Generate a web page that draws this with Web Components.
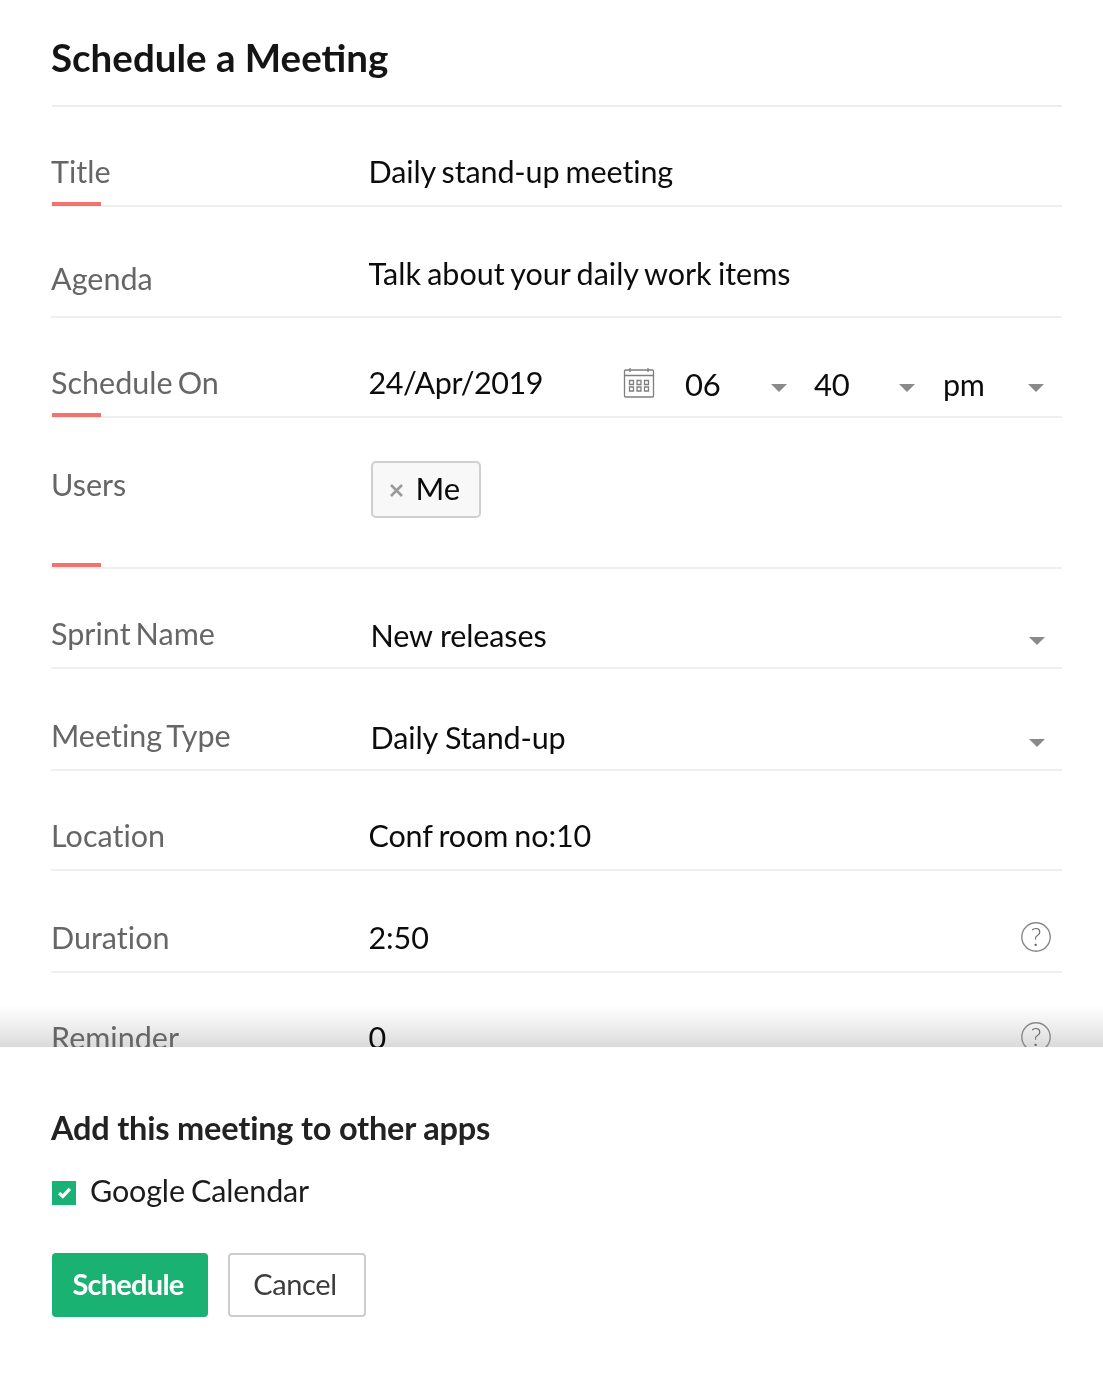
<!DOCTYPE html>
<html><head><meta charset="utf-8"><title>Schedule a Meeting</title>
<style>
html,body{margin:0;background:#fff}
body{font-family:Lato,"Open Sans",sans-serif;width:1103px;height:1377px;overflow:hidden}
</style></head><body>
<schedule-dialog>
  <form-heading slot="head">Schedule a Meeting</form-heading>
  <form-field label="Title" h="100" lt="45" vt="45" mark>Daily stand-up meeting</form-field>
  <form-field label="Agenda" h="111" lt="52" vt="47"><span style="letter-spacing:0">Talk about your daily work items</span></form-field>
  <form-field label="Schedule On" h="100" lt="45" vt="45" mark>
    <date-time></date-time>
  </form-field>
  <form-field label="Users" h="151" lt="47" vt="43" mark="hi" vx="2"><user-chip>Me</user-chip></form-field>
  <form-field label="Sprint Name" h="100" lt="45" vt="47" vx="2"><select-box style="word-spacing:0">New releases</select-box></form-field>
  <form-field label="Meeting Type" h="102" lt="47" vt="49" vx="2"><select-box style="word-spacing:0">Daily Stand-up</select-box></form-field>
  <form-field label="Location" h="100" lt="45" vt="45">Conf room no:10</form-field>
  <form-field label="Duration" h="102" lt="47" vt="47"><help-value>2:50</help-value></form-field>
  <form-field label="Reminder" h="100" lt="45" vt="45"><help-value>0</help-value></form-field>
  <form-footer slot="foot"></form-footer>
</schedule-dialog>
<script>
const def=(name,css,html,extra)=>{
  customElements.define(name,class extends HTMLElement{
    constructor(){super();this.attachShadow({mode:'open'}).innerHTML=`<style>${css}</style>${html}`;}
    connectedCallback(){if(extra)extra(this)}
  });
};
def('schedule-dialog',`
  :host{display:block;width:1103px;height:1377px;background:#fff;filter:blur(.4px)}
  .scroll{height:1047px;overflow:hidden;box-sizing:border-box;padding:0 41px 0 51px;
    background:linear-gradient(to bottom,rgba(220,220,220,0),rgba(222,222,222,.6) 60%,rgb(218,218,218)) left bottom/100% 42px no-repeat}
`,`<div class="scroll"><slot name="head"></slot><slot></slot></div><slot name="foot"></slot>`);
def('form-heading',`
  :host{display:block;box-sizing:border-box;height:107px;padding-top:33px;margin-left:1px;border-bottom:2px solid #ececec;
    font-size:38.5px;line-height:48px;font-weight:700;color:#141414;letter-spacing:0;text-indent:-1px}
`,`<slot></slot>`);
def('form-field',`
  :host{display:grid;grid-template-columns:317.5px 1fr;box-sizing:border-box;position:relative;border-bottom:2px solid #efefef;
    font-size:30.5px;line-height:38px;color:#0c0c0c;letter-spacing:-.12px;word-spacing:-1.5px}
  :host{border-image:linear-gradient(to right,transparent 1px,#efefef 1px) 2}
  .l{color:#666;letter-spacing:.02px;word-spacing:-2.8px}
  .v{min-width:0}
  .m{position:absolute;left:1px;bottom:-1px;width:49px;height:4px;background:#f2726d;display:none}
  :host([mark]) .m{display:block}
  :host([mark="hi"]) .m{bottom:0}
`,`<div class="l"></div><div class="v"><slot></slot></div><div class="m"></div>`,el=>{
  const s=el.shadowRoot,a=k=>el.getAttribute(k);
  el.style.height=a('h')+'px';
  const l=s.querySelector('.l'),v=s.querySelector('.v');
  l.textContent=a('label');
  l.style.paddingTop=a('lt')+'px';
  v.style.paddingTop=a('vt')+'px';
  v.style.paddingLeft=(a('vx')||0)+'px';
});
def('caret-mark',`
  :host{display:block;width:0;height:0;border-left:8px solid transparent;border-right:8px solid transparent;border-top:8px solid #8a8a8a}
`,``);
def('select-box',`
  :host{display:flex;justify-content:space-between;align-items:center;padding-right:17px}
  caret-mark{margin-top:12px}
`,`<span><slot></slot></span><caret-mark></caret-mark>`);
def('date-time',`
  :host{display:flex;align-items:center;margin-right:17px;height:38px}
  .d{width:254.5px;letter-spacing:-.45px}
  svg{display:block;width:32px;height:32px;margin-right:30px;flex:none}
  .p{display:flex;align-items:center;justify-content:space-between;font-size:31px;margin-top:4px}
  .p span{display:block}
  .p caret-mark{margin-top:8px}
  .h{width:102px;margin-right:27px}
  .n{width:101px;margin-right:28px}
  .a{width:101px}
  .a span{font-size:30.5px;letter-spacing:-.4px}
`,`<span class="d">24/Apr/2019</span>
<svg viewBox="0 0 32 32" fill="none" stroke="#7f7f7f" stroke-width="1.3">
  <rect x="1.5" y="4" width="29" height="27" rx="1"/>
  <path d="M1.5 9.5H30.5M7 2v4M25 2v4"/>
  <path d="M6.5 14.5h4v4h-4zM14 14.5h4v4h-4zM21.5 14.5h4v4h-4zM6.5 21h4v4h-4zM14 21h4v4h-4zM21.5 21h4v4h-4z"/>
</svg>
<div class="p h"><span>06</span><caret-mark></caret-mark></div>
<div class="p n"><span>40</span><caret-mark></caret-mark></div>
<div class="p a"><span>pm</span><caret-mark></caret-mark></div>`);
def('user-chip',`
  :host{display:inline-flex;align-items:center;box-sizing:border-box;height:57px;width:110px;border:2px solid #cfcfcf;border-radius:5px;background:#f8f8f8;padding:0 0 4px 16px;font-size:31px;letter-spacing:0}
  svg{width:15px;height:15px;margin:6px 12px 0 0;flex:none}
`,`<svg viewBox="0 0 15 15"><path d="M2 2l11 11M13 2L2 13" stroke="#9a9a9a" stroke-width="2.6"/></svg><slot></slot>`);
def('help-value',`
  :host{display:flex;justify-content:space-between;padding-right:10px}
  svg{width:32px;height:32px;margin-top:3px}
  text{font:300 25px Lato,sans-serif;fill:#666}
`,`<span><slot></slot></span><svg viewBox="0 0 32 32"><circle cx="16" cy="16" r="14.2" fill="none" stroke="#888" stroke-width="1.4"/><text x="16" y="24.5" text-anchor="middle">?</text></svg>`);
def('form-footer',`
  :host{display:block;padding:61px 0 0 52px;color:#161616}
  h2{margin:0;font-size:32.5px;line-height:40px;font-weight:700;letter-spacing:-.2px;color:#222;margin-left:-1px}
  .c{display:flex;align-items:center;margin-top:20px;font-size:30.5px;line-height:44px;letter-spacing:-.15px;word-spacing:-1.5px;color:#1c1c1c}
  .b{width:24px;height:24px;background:#18b374;margin-right:14px;display:flex;align-items:center;justify-content:center;margin-top:5px}
  .b svg{width:15px;height:15px}
  .r{display:flex;gap:20px;margin-top:41px}
  .s,.x{box-sizing:border-box;height:64px;border-radius:4px;display:flex;align-items:center;justify-content:center;font-size:29px;letter-spacing:-.4px;padding:0 4px 4px 0}
  .s{width:156px;background:#19b273;color:#fff;font-weight:700;letter-spacing:-.75px}
  .x{width:138px;background:#fff;border:2px solid #cdcdcd;color:#3c3c3c}
`,`<h2>Add this meeting to other apps</h2>
<div class="c"><span class="b"><svg viewBox="0 0 14 14"><path d="M2 7.5l3.4 3.2L12 3.6" fill="none" stroke="#fff" stroke-width="3"/></svg></span>Google Calendar</div>
<div class="r"><div class="s">Schedule</div><div class="x">Cancel</div></div>`);
</script>
</body></html>
